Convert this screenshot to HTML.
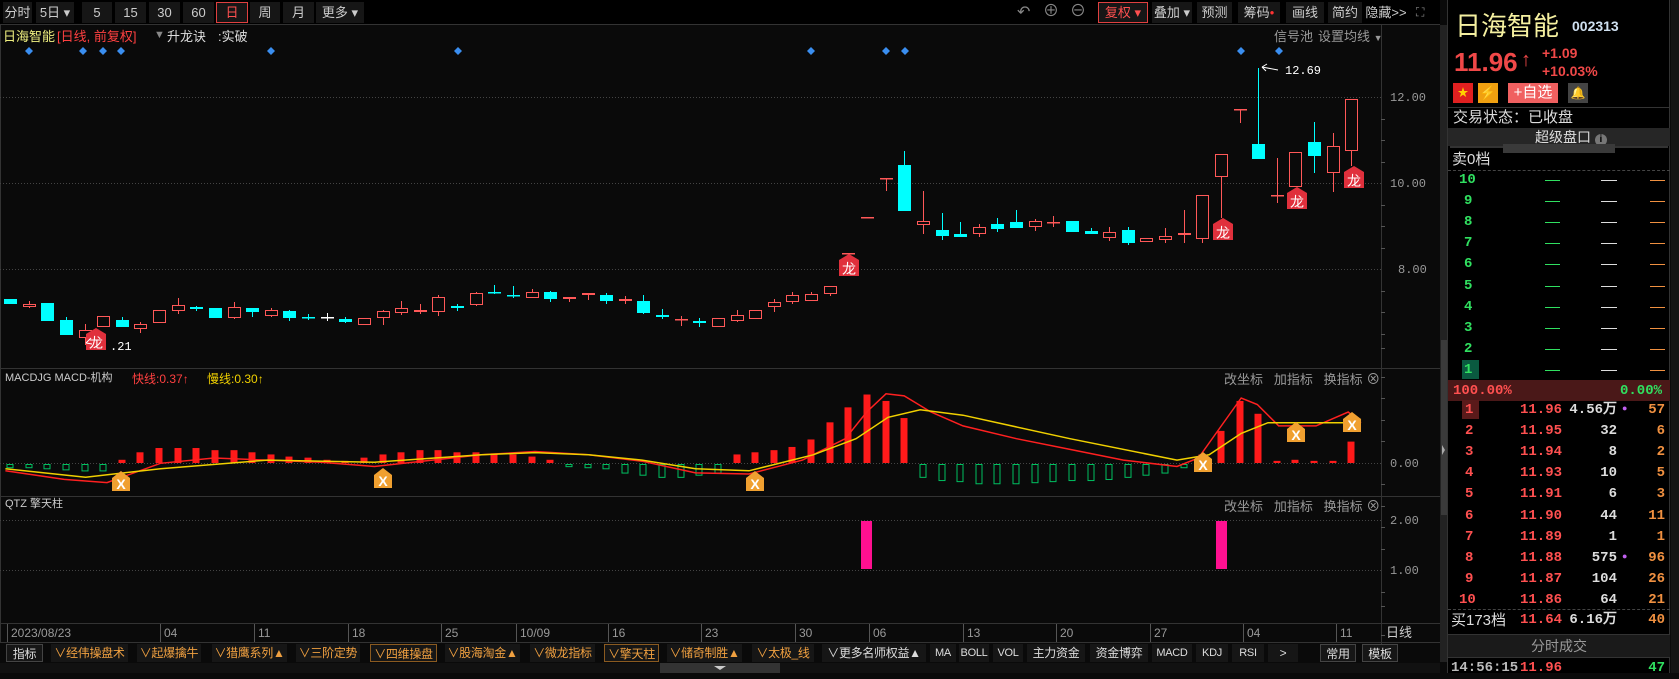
<!DOCTYPE html>
<html><head><meta charset="utf-8">
<style>
*{margin:0;padding:0;box-sizing:border-box}
body{width:1679px;height:673px;background:#0a0a0a;overflow:hidden;position:relative;font-family:"Liberation Sans","Noto Sans CJK SC",sans-serif;font-size:12px;color:#ccc}
.a{position:absolute;white-space:nowrap;line-height:1}
.btn{position:absolute;top:2px;height:21px;background:#161616;color:#ccc;font-size:13px;line-height:21px;text-align:center;white-space:nowrap;overflow:hidden}
.tab{position:absolute;top:644px;height:18px;background:#161616;color:#f0a040;font-size:12px;line-height:18px;text-align:center;white-space:nowrap;overflow:hidden;letter-spacing:-0.3px}
.tab.g{color:#ddd}
.m{font-family:"Liberation Mono",monospace}
.row{position:absolute;left:1447px;width:223px;height:21px;font-size:14px;font-weight:bold;font-family:"Liberation Mono","Liberation Sans",sans-serif}
.row span{position:absolute;top:3px;line-height:1}
</style></head><body>
<div class="a" style="left:0;top:0;width:1440px;height:25px;background:#000;border-bottom:1px solid #333"></div>
<div class="btn" style="left:3px;width:29px">分时</div>
<div class="btn" style="left:36px;width:38px">5日 ▾</div>
<div class="btn" style="left:82px;width:30px">5</div>
<div class="btn" style="left:115px;width:31px">15</div>
<div class="btn" style="left:149px;width:31px">30</div>
<div class="btn" style="left:183px;width:31px">60</div>
<div class="btn" style="left:216px;width:32px;border:1px solid #e04040;color:#ff5050;line-height:19px">日</div>
<div class="btn" style="left:250px;width:30px">周</div>
<div class="btn" style="left:283px;width:31px">月</div>
<div class="btn" style="left:316px;width:48px">更多 ▾</div>
<div class="a" style="left:1017px;top:5px;font-size:16px;color:#888">↶</div>
<div class="a" style="left:1043px;top:4px;font-size:16px;color:#888">⊕</div>
<div class="a" style="left:1070px;top:4px;font-size:16px;color:#888">⊖</div>
<div class="btn" style="left:1098px;width:50px;border:1px solid #e04040;color:#ff5050;line-height:19px">复权 ▾</div>
<div class="btn" style="left:1152px;width:40px">叠加 ▾</div>
<div class="btn" style="left:1197px;width:35px">预测</div>
<div class="btn" style="left:1238px;width:42px">筹码<span style="color:#f33;font-size:8px;vertical-align:top">●</span></div>
<div class="btn" style="left:1286px;width:38px">画线</div>
<div class="btn" style="left:1328px;width:34px">简约</div>
<div class="btn" style="left:1364px;width:44px;background:none">隐藏&gt;&gt;</div>
<div class="a" style="left:1416px;top:6px;font-size:12px;color:#888">⛶</div>

<div class="a" style="left:3px;top:30px;font-size:13px;color:#f0f080">日海智能</div>
<div class="a" style="left:57px;top:30px;font-size:13px;color:#ff4040">[日线, 前复权]</div>
<div class="a" style="left:154px;top:30px;font-size:11px;color:#888">▼</div>
<div class="a" style="left:167px;top:30px;font-size:13px;color:#ddd">升龙诀</div>
<div class="a" style="left:218px;top:30px;font-size:13px;color:#ddd">:实破</div>
<div class="a" style="left:1274px;top:30px;font-size:13px;color:#999">信号池</div>
<div class="a" style="left:1318px;top:30px;font-size:13px;color:#999">设置均线 <span style="font-size:9px">▼</span></div>

<div class="a" style="left:5px;top:373px;font-size:11px;color:#ccc" >MACDJG MACD-机构</div>
<div class="a" style="left:132px;top:373px;font-size:12px;color:#ff4040">快线:0.37↑</div>
<div class="a" style="left:207px;top:373px;font-size:12px;color:#f0d000">慢线:0.30↑</div>
<div class="a" style="left:1224px;top:372px;font-size:13px;color:#999">改坐标&nbsp;&nbsp;&nbsp;加指标&nbsp;&nbsp;&nbsp;换指标 <span style="font-size:14px">⊗</span></div>
<div class="a" style="left:5px;top:499px;font-size:11px;color:#ccc">QTZ 擎天柱</div>
<div class="a" style="left:1224px;top:499px;font-size:13px;color:#999">改坐标&nbsp;&nbsp;&nbsp;加指标&nbsp;&nbsp;&nbsp;换指标 <span style="font-size:14px">⊗</span></div>

<svg class="a" style="left:0;top:0" width="1447" height="673" id="sv">
<g stroke="#333" stroke-width="1">
<line x1="1381.5" y1="25" x2="1381.5" y2="662"/>
<line x1="0" y1="368.5" x2="1440" y2="368.5"/>
<line x1="0" y1="496.5" x2="1440" y2="496.5"/>
<line x1="0" y1="623.5" x2="1440" y2="623.5"/>
<line x1="0" y1="642.5" x2="1440" y2="642.5"/>
<line x1="0.5" y1="25" x2="0.5" y2="642"/>
</g>
<g stroke="#444" stroke-dasharray="1,2">
<line x1="0" y1="97.5" x2="1381" y2="97.5"/>
<line x1="0" y1="183.5" x2="1381" y2="183.5"/>
<line x1="0" y1="269.5" x2="1381" y2="269.5"/>
<line x1="0" y1="463.5" x2="1381" y2="463.5"/>
<line x1="0" y1="520.5" x2="1381" y2="520.5"/>
<line x1="0" y1="570.5" x2="1381" y2="570.5"/>
</g>
<g fill="#999" font-family="Liberation Mono,monospace" font-size="12">
<text x="1390" y="101">12.00</text><text x="1390" y="187">10.00</text><text x="1398" y="273">8.00</text>
<text x="1390" y="467">0.00</text><text x="1390" y="524">2.00</text><text x="1390" y="574">1.00</text>
</g>
<g id="ticks" stroke="#555"></g>
<g id="dates" fill="#999" font-size="12" font-family="Liberation Sans,sans-serif"></g>
<text x="1386" y="637" fill="#ccc" font-size="13" font-family="Liberation Sans,Noto Sans CJK SC,sans-serif">日线</text>
<g id="dia" fill="#3a8ef0"></g>
<g id="macdbars"></g>
<polyline id="dif" fill="none" stroke="#ff2020" stroke-width="1.5"/>
<polyline id="dea" fill="none" stroke="#f0d000" stroke-width="1.5"/>
<g id="cand"></g>
<g id="marks"></g>
<rect x="861" y="521" width="11" height="48" fill="#ff1090"/>
<rect x="1216" y="521" width="11" height="48" fill="#ff1090"/>
<g stroke="#fff" fill="none"><line x1="1262" y1="67" x2="1278" y2="70"/><path d="M1262 67 l5 -3 M1262 67 l4 4"/></g>
<text x="1285" y="74" fill="#fff" font-size="12" font-family="Liberation Mono,monospace">12.69</text>
<path d="M86 343 l5 -5 M86 343 l6 1" stroke="#fff" fill="none"/>
<text x="110" y="350" fill="#fff" font-size="12" font-family="Liberation Mono,monospace">.21</text>
<rect x="1440" y="25" width="7" height="637" fill="#222"/>
<rect x="1441" y="340" width="6" height="175" fill="#3a3a3a"/>
<path d="M1442 445 l3 5 l-3 5z" fill="#aaa"/>
<rect x="0" y="663" width="1440" height="10" fill="#111"/>
<rect x="660" y="663" width="120" height="10" fill="#333"/>
<path d="M714 666 h12 l-6 4z" fill="#ccc"/>
</svg>

<div class="tab g" style="left:6px;width:37px;border:1px solid #444">指标</div>
<div class="tab" style="left:51px;width:77px">∨经伟操盘术</div>
<div class="tab" style="left:137px;width:64px">∨起爆擒牛</div>
<div class="tab" style="left:212px;width:75px">∨猎鹰系列▲</div>
<div class="tab" style="left:296px;width:64px">∨三阶定势</div>
<div class="tab" style="left:370px;width:67px;border:1px solid #8a5a20">∨四维操盘</div>
<div class="tab" style="left:445px;width:75px">∨股海淘金▲</div>
<div class="tab" style="left:530px;width:65px">∨微龙指标</div>
<div class="tab" style="left:604px;width:55px;border:1px solid #8a5a20">∨擎天柱</div>
<div class="tab" style="left:667px;width:75px">∨储奇制胜▲</div>
<div class="tab" style="left:752px;width:62px">∨太极_线</div>
<div class="tab g" style="left:822px;width:104px">∨更多名师权益▲</div>
<div class="tab g" style="left:930px;width:26px;font-size:11px">MA</div>
<div class="tab g" style="left:959px;width:30px;font-size:11px">BOLL</div>
<div class="tab g" style="left:993px;width:30px;font-size:11px">VOL</div>
<div class="tab g" style="left:1027px;width:58px">主力资金</div>
<div class="tab g" style="left:1090px;width:58px">资金博弈</div>
<div class="tab g" style="left:1152px;width:40px;font-size:11px">MACD</div>
<div class="tab g" style="left:1196px;width:32px;font-size:11px">KDJ</div>
<div class="tab g" style="left:1232px;width:32px;font-size:11px">RSI</div>
<div class="tab g" style="left:1268px;width:30px">&gt;</div>
<div class="tab g" style="left:1320px;width:36px;border:1px solid #444">常用</div>
<div class="tab g" style="left:1362px;width:36px;border:1px solid #444">模板</div>

<div class="a" style="left:1447px;top:0;width:223px;height:673px;background:#000;border-left:1px solid #333;border-right:1px solid #333"></div>
<div class="a" style="left:1671px;top:0;width:8px;height:673px;background:#141414"></div>
<div class="a" style="left:1455px;top:13px;font-size:26px;color:#f5f0a0">日海智能</div>
<div class="a" style="left:1572px;top:19px;font-size:14px;font-weight:bold;color:#cfe0f0">002313</div>
<div class="a" style="left:1454px;top:49px;font-size:26px;font-weight:bold;color:#f04848">11.96</div>
<div class="a" style="left:1521px;top:50px;font-size:20px;font-weight:bold;color:#f04848">↑</div>
<div class="a" style="left:1542px;top:46px;font-size:14px;font-weight:bold;color:#f04848">+1.09</div>
<div class="a" style="left:1542px;top:64px;font-size:14px;font-weight:bold;color:#f04848">+10.03%</div>
<div class="a" style="left:1453px;top:83px;width:20px;height:20px;background:#e02020;color:#ffd000;font-size:11px;text-align:center;line-height:20px">★</div>
<div class="a" style="left:1478px;top:83px;width:20px;height:20px;background:#f0a010;color:#fff;font-size:13px;text-align:center;line-height:20px">⚡</div>
<div class="a" style="left:1508px;top:83px;width:50px;height:20px;background:#f06060;color:#fff;font-size:15px;text-align:center;line-height:20px">+自选</div>
<div class="a" style="left:1568px;top:83px;width:20px;height:20px;background:#444;color:#777;font-size:12px;text-align:center;line-height:20px">🔔</div>
<div class="a" style="left:1448px;top:107px;width:222px;height:1px;background:#333"></div>
<div class="a" style="left:1453px;top:110px;font-size:15px;color:#ddd">交易状态：已收盘</div>
<div class="a" style="left:1448px;top:128px;width:222px;height:18px;background:#262626"></div>
<div class="a" style="left:1535px;top:130px;font-size:14px;color:#ddd">超级盘口 <span style="display:inline-block;width:12px;height:12px;border-radius:6px;background:#777;color:#000;font-size:10px;text-align:center;line-height:12px;font-weight:bold">i</span></div>
<div class="a" style="left:1450px;top:146px;width:218px;height:2px;background:#333"></div>
<div class="a" style="left:1503px;top:144px;width:112px;height:9px;background:#3a3a3a"></div>
<div class="a" style="left:1448px;top:170px;width:222px;border-top:1px dashed #444"></div>
<div class="a" style="left:1448px;top:380px;width:222px;height:21px;background:#4a1818"></div>
<div class="a" style="left:1448px;top:609px;width:222px;border-top:1px dashed #444"></div>
<div class="a" style="left:1448px;top:634px;width:222px;height:1px;background:#333"></div>
<div class="a" style="left:1448px;top:635px;width:222px;height:22px;background:#1a1a1a;color:#999;font-size:14px;text-align:center;line-height:22px">分时成交</div>
<div class="a" style="left:1448px;top:657px;width:222px;height:1px;background:#333"></div>
<div id="rp"></div>

<script>
var NS="http://www.w3.org/2000/svg";
function el(p,t,a){var e=document.createElementNS(NS,t);for(var k in a)e.setAttribute(k,a[k]);p.appendChild(e);return e;}
var X=function(i){return 10+18.63*i;};
var D=[["2023/08/23",7],["04",160],["11",254],["18",348],["25",441],["10/09",516],["16",608],["23",701],["30",795],["06",869],["13",963],["20",1056],["27",1150],["04",1243],["11",1336]];
var dg=document.getElementById("dates"),tk=document.getElementById("ticks");
D.forEach(function(d){el(dg,"text",{x:d[1]+4,y:637}).textContent=d[0];el(tk,"line",{x1:d[1]+.5,y1:624,x2:d[1]+.5,y2:642});});
[119,140,162,205,226,248,291,312,334,348,377,398,420,441,484,506,527,549,592,606,635].forEach(function(y){el(tk,"line",{x1:1381,y1:y+.5,x2:1385,y2:y+.5});});
var dd=document.getElementById("dia");
[29,83,103,121,271,458,811,886,905,1241,1279].forEach(function(x){el(dd,"path",{d:"M"+x+" 47 l4 4 l-4 4 l-4 -4z"});});
var C=[[299,304,'c'],[304,307,'r',301,308],[303,321,'c'],[320,335,'c',317],[330,338,'r',324,345],[316,327,'r'],[320,327,'c',317],[324,329,'r',322,333],[310,323,'r'],[305,311,'r',298,314],
[307,309,'c',306,311],[308,318,'c'],[307,318,'r',302,319],[308,312,'c',308,317],[310,316,'r',308,317],[311,318,'c',310,321],[317,318,'c',314,320],[317,318,'w',313,321],[319,322,'c',317,323],[318,325,'r'],
[311,318,'r',310,325],[308,313,'r',301,315],[310,312,'R',304,314],[297,312,'r',295,316],[306,308,'c',304,311],[293,305,'r',292,306],[292,293,'c',285,294],[295,296,'c',286,298],[292,298,'r',289,298],[292,299,'c',291,302],
[297,299,'r',297,302],[293,295,'r',293,300],[295,301,'c',293,304],[299,301,'R',296,304],[301,313,'c',295,314],[315,317,'c',309,319],[319,320,'R',316,326],[321,323,'c',318,327],[318,327,'r'],[315,321,'r',310,322],
[310,319,'r'],[302,307,'r',299,312],[295,302,'r',292,304],[294,301,'r',292,301],[286,294,'r',286,296],[253,254,'R'],[217,218,'R'],[178,179,'R',178,191],[165,211,'c',151,211],[221,225,'r',191,234],
[230,236,'c',213,240],[234,237,'c',222,237],[227,234,'r',224,237],[224,229,'c',218,232],[222,228,'c',210,228],[221,227,'r',219,231],[222,223,'R',216,227],[221,232,'c'],[231,234,'c',228,234],[232,238,'r',227,241],
[230,243,'c',227,245],[238,242,'r'],[236,240,'r',228,243],[233,235,'R',210,243],[195,239,'r',195,243],[154,177,'r',154,218],[109,110,'R',109,123],[144,159,'c',68,159],[195,196,'R',158,203],[152,187,'r'],
[142,156,'c',122,173],[146,173,'r',133,192],[99,151,'r',99,166]];
var cg=document.getElementById("cand");
C.forEach(function(c,i){var x=Math.round(X(i));var t=c[2];var col=t=='c'?'#00ffff':(t=='w'?'#ffffff':'#ff5858');
 var wt=c.length>3?c[3]:c[0],wb=c.length>4?c[4]:c[1];
 el(cg,"line",{x1:x+.5,y1:Math.min(wt,c[0]),x2:x+.5,y2:Math.max(wb,c[1]),stroke:col});
 var h=c[1]-c[0];
 if(t=='c')el(cg,"rect",{x:x-6,y:c[0],width:13,height:Math.max(h,1.5),fill:col});
 else if(t=='r')el(cg,"rect",{x:x-5.5,y:c[0]+.5,width:12,height:Math.max(h-1,1),fill:"#0a0a0a",stroke:col});
 else el(cg,"rect",{x:x-6,y:c[0],width:13,height:Math.max(h,1.5),fill:col});
});
var V=[-3,-3,-4,-5,-6,-6,3,10,14,14,14,12,12,10,8,6,5,3,2,5,8,10,12,12,10,10,9,8,6,3,-2,-3,-4,-8,-10,-12,-12,-10,-8,8,10,12,15,22,38,52,64,58,42,-12,-15,-16,-18,-18,-18,-17,-16,-15,-15,-14,-12,-10,-8,-3,8,30,58,46,2,3,2,2,20];
var mb=document.getElementById("macdbars");
V.forEach(function(v,i){var x=Math.round(X(i));v=v*1.07;
 if(v>0)el(mb,"rect",{x:x-3.5,y:463-v,width:7,height:v,fill:"#ff1a1a"});
 else el(mb,"rect",{x:x-3,y:464.5,width:6,height:-v,fill:"none",stroke:"#00c060"});});
function pts(a){return a.map(function(p){return (p[0]*1.07).toFixed(1)+","+(p[1]*1.07).toFixed(1);}).join(" ");}
document.getElementById("dif").setAttribute("points",pts([[5,440],[60,448],[100,451],[150,433],[200,428],[300,432],[350,436],[450,425],[500,422],[550,425],[600,431],[650,442],[700,443],[750,430],[790,410],[810,385],[828,368],[845,370],[870,385],[900,398],[950,410],[1000,420],[1050,430],[1100,436],[1120,428],[1140,400],[1160,372],[1175,378],[1195,398],[1230,398],[1260,385],[1272,395]]));
document.getElementById("dea").setAttribute("points",pts([[5,438],[80,446],[150,438],[250,430],[350,432],[450,425],[500,423],[550,425],[600,430],[650,438],[700,440],[760,425],[800,410],[830,390],[860,383],[900,388],[1000,410],[1100,430],[1130,425],[1160,405],[1185,395],[1260,395],[1272,392]]));
var mk=document.getElementById("marks");
function dragon(x,y){el(mk,"path",{d:"M"+(x-10)+" "+(y-6)+" l10 -6 l10 6 v16 h-20z",fill:"#e0303c"});var t=el(mk,"text",{x:x,y:y+8,fill:"#fff","font-size":"14","text-anchor":"middle","font-family":"Noto Sans CJK SC,sans-serif"});t.textContent="龙";}
[[96,340],[849,266],[1223,230],[1297,199],[1354,178]].forEach(function(p){dragon(p[0],p[1]);});
function xm(x,y){el(mk,"path",{d:"M"+(x-9)+" "+(y-4)+" l9 -7 l9 7 v13 h-18z",fill:"#f0a030"});var t=el(mk,"text",{x:x,y:y+7,fill:"#fff","font-size":"14","font-weight":"bold","text-anchor":"middle","font-family":"Liberation Sans,sans-serif"});t.textContent="X";}
[[121,482],[383,479],[755,482],[1203,463],[1296,433],[1352,423]].forEach(function(p){xm(p[0],p[1]);});
var rp=document.getElementById("rp"),h="";
function row(y,a){h+='<div class="row" style="top:'+(y-10)+'px">'+a+'</div>';}
h+='<div class="a" style="left:1452px;top:152px;font-size:15px;color:#ddd">卖0档</div>';
h+='<div class="a" style="left:1462px;top:360px;width:17px;height:19px;background:#0a5a40"></div>';
for(var k=0;k<10;k++){var y=180+k*21.1,n=10-k;
 row(y,'<span style="left:'+(n==10?12:17)+'px;color:#30e060">'+n+'</span><span style="left:98px;top:10px;width:15px;height:1px;background:#30e060"></span><span style="left:154px;top:10px;width:16px;height:1px;background:#ddd"></span><span style="left:203px;top:10px;width:15px;height:1px;background:#f09040"></span>');}
h+='<div class="row" style="top:380px"><span style="left:6px;top:4px;color:#ff5050">100.00%</span><span style="right:8px;top:4px;color:#30e060">0.00%</span></div>';
var B=[["1","11.96","4.56万","57",1],["2","11.95","32","6"],["3","11.94","8","2"],["4","11.93","10","5"],["5","11.91","6","3"],["6","11.90","44","11"],["7","11.89","1","1"],["8","11.88","575","96",1],["9","11.87","104","26"],["10","11.86","64","21"]];
B.forEach(function(b,k){var y=410+k*21.1;
 row(y,(k==0?'<span style="left:15px;top:0;width:17px;height:19px;background:#5a1a1a"></span>':'')+'<span style="left:'+(b[0]=="10"?12:18)+'px;color:#ff5050">'+b[0]+'</span><span style="right:108px;color:#ff5050">'+b[1]+'</span><span style="right:53px;color:#ddd">'+b[2]+'</span>'+(b[4]?'<span style="left:175px;top:5px;color:#c060f0;font-size:9px">●</span>':'')+'<span style="right:5px;color:#f09040">'+b[3]+'</span>');});
row(620,'<span style="left:4px;color:#ddd;font-weight:normal;font-family:Liberation Sans,Noto Sans CJK SC,sans-serif;font-size:15px">买173档</span><span style="right:108px;color:#ff5050">11.64</span><span style="right:53px;color:#ddd">6.16万</span><span style="right:5px;color:#f09040">40</span>');
row(668,'<span style="left:4px;color:#bbb">14:56:15</span><span style="right:108px;color:#ff5050">11.96</span><span style="right:5px;color:#30e060">47</span>');
rp.innerHTML=h;
</script>
</body></html>
